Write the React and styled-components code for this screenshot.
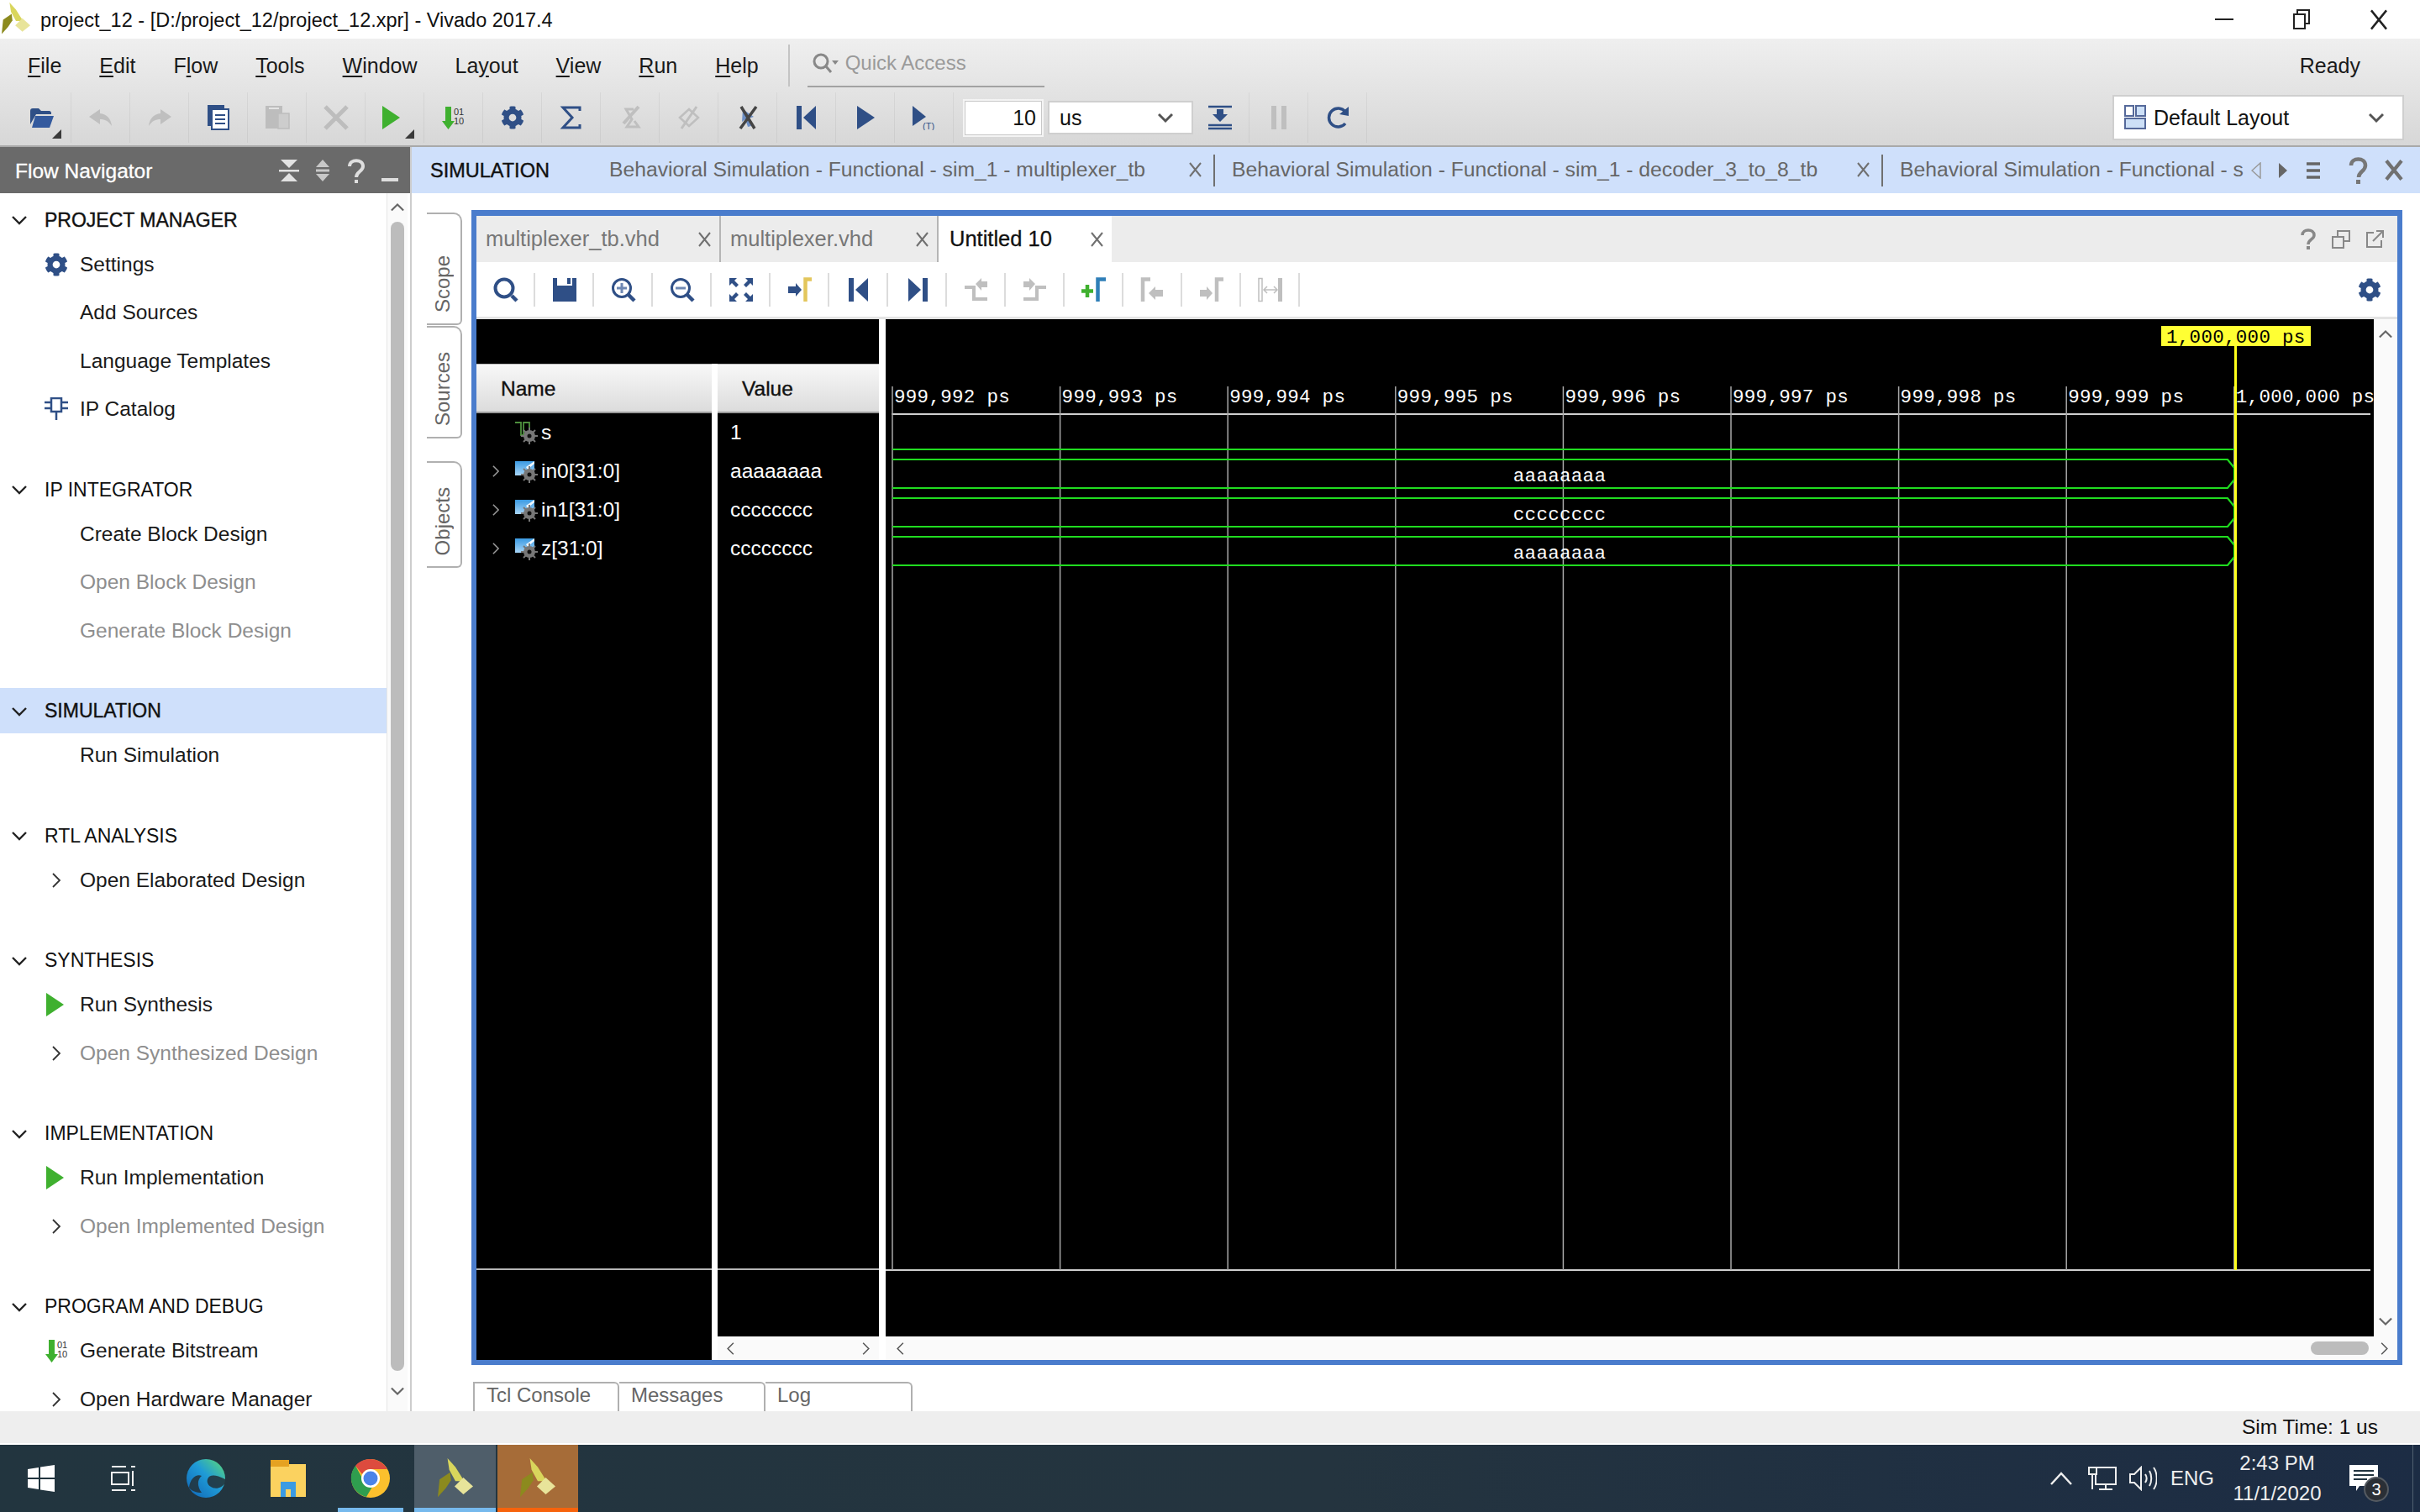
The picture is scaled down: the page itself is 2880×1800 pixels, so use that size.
import styled, { createGlobalStyle } from "styled-components";
import { FaCog } from "react-icons/fa";

const NAVY = "#2f4f86";
const OFF = "#bfbfbf";
const GREEN = "#3fb02f";
const WAVE_GREEN = "#20dc20";

const GlobalStyle = createGlobalStyle`
  html, body { margin: 0; padding: 0; background: #fff; overflow: hidden; }
  body { font-family: "Liberation Sans", Arial, sans-serif; font-size: 25px; color: #111; }
`;

const Page = styled.div`
  width: 2880px;
  height: 1800px;
  display: flex;
  flex-direction: column;
  overflow: hidden;
`;

/* ---------- title bar ---------- */
const TitleBar = styled.div`
  height: 46px;
  display: flex;
  align-items: center;
  background: #fff;
  padding-left: 2px;
`;
const TitleText = styled.span`
  margin: 2px 0 0 12px;
  font-size: 23.5px;
  color: #111;
`;
const WinControls = styled.div`
  margin-left: auto;
  display: flex;
  padding-right: 3px;
`;
const WinControl = styled.div`
  width: 92px;
  height: 46px;
  display: flex;
  align-items: center;
  justify-content: center;
`;

/* ---------- menu and main toolbar ---------- */
const TopBars = styled.div`
  height: 127px;
  border-bottom: 2px solid #a9a9a9;
  background: linear-gradient(#efefef, #d7d7d7);
`;
const MenuRow = styled.div`
  height: 64px;
  display: flex;
  align-items: center;
  padding-left: 33px;
`;
const MenuList = styled.div`
  display: flex;
  gap: 45px;
`;
const MenuItem = styled.span`
  font-size: 25px;
  color: #1a1a1a;
`;
const Mnemonic = styled.span`
  text-decoration: underline;
  text-underline-offset: 3px;
`;
const MenuDivider = styled.div`
  width: 2px;
  height: 50px;
  margin-left: 35px;
  background: #c4c4c4;
`;
const QuickAccess = styled.div`
  width: 282px;
  height: 50px;
  margin: 2px 0 0 21px;
  box-sizing: border-box;
  border-bottom: 2px solid #a2a2a2;
  display: flex;
  align-items: center;
  gap: 8px;
  padding: 0 0 7px 5px;
  font-size: 24px;
  color: #9a9a9a;
`;
const ReadyLabel = styled.span`
  margin-left: auto;
  padding-right: 71px;
  font-size: 25px;
  color: #1a1a1a;
`;
const ToolRow = styled.div`
  height: 63px;
  box-sizing: border-box;
  display: flex;
  align-items: center;
  padding: 0 0 3px 15px;
`;
const Tool = styled.div`
  position: relative;
  width: 70px;
  height: 100%;
  flex: none;
  box-sizing: border-box;
  display: flex;
  align-items: center;
  justify-content: center;
  padding-right: ${(p) => p.$nudge || 0}px;
  margin-left: ${(p) => p.$ml || 0}px;
  border-right: 1px solid rgba(0, 0, 0, 0.05);
  ${(p) => p.$caret && `
    &::after {
      content: "";
      position: absolute;
      right: 11px;
      bottom: 5px;
      border-style: solid;
      border-width: 0 0 11px 11px;
      border-color: transparent transparent #3a3a3a transparent;
    }
  `}
`;
const WaveTool = styled.div`
  position: relative;
  width: 70px;
  height: 100%;
  flex: none;
  display: flex;
  align-items: center;
  justify-content: center;
  &::after {
    content: "";
    position: absolute;
    right: 0;
    top: 13px;
    width: 2px;
    height: 40px;
    background: #dcdcdc;
  }
`;
const NumberBox = styled.div`
  width: 96px;
  height: 45px;
  margin-left: 11px;
  box-sizing: border-box;
  background: #fff;
  border: 2px solid #f4f4f4;
  outline: 1px solid #c8c8c8;
  outline-offset: -3px;
  display: flex;
  align-items: center;
  justify-content: flex-end;
  padding-right: 7px;
  font-size: 25px;
`;
const SelectBox = styled.div`
  width: ${(p) => p.$w}px;
  height: ${(p) => p.$h}px;
  margin-left: ${(p) => p.$ml || 0}px;
  box-sizing: border-box;
  background: #fff;
  border: 2px solid #cfcfcf;
  display: flex;
  align-items: center;
  gap: 9px;
  padding: 0 22px 0 12px;
  font-size: 25px;
  & > svg:last-child { margin-left: auto; }
`;
const LayoutWrap = styled.div`
  margin-left: auto;
  margin-right: 19px;
`;

/* ---------- body ---------- */
const Body = styled.div`
  height: 1505px;
  display: flex;
`;
const Nav = styled.div`
  width: 490px;
  flex: none;
  box-sizing: border-box;
  display: flex;
  flex-direction: column;
  border-right: 2px solid #cdcdcd;
`;
const NavTitle = styled.div`
  height: 55px;
  flex: none;
  box-sizing: border-box;
  background: #6a6a6a;
  color: #fff;
  display: flex;
  align-items: center;
  padding: 2px 0 0 18px;
  font-size: 24.5px;
  -webkit-text-stroke: 0.3px #fff;
`;
const NavTitleIcons = styled.div`
  margin-left: auto;
  display: flex;
  margin-right: 4px;
`;
const NavTitleIcon = styled.div`
  width: 40px;
  display: flex;
  justify-content: center;
`;
const NavBody = styled.div`
  flex: 1;
  min-height: 0;
  display: flex;
`;
const NavList = styled.div`
  width: 460px;
  flex: none;
  padding-top: 6px;
  overflow: hidden;
`;
const NavSection = styled.div`
  margin-bottom: 41px;
`;
const NavHeader = styled.div`
  height: 50px;
  box-sizing: border-box;
  padding-top: 2px;
  display: flex;
  align-items: center;
  font-size: 23px;
  color: #111;
  background: ${(p) => (p.$active ? "#cfe0fb" : "transparent")};
  box-shadow: ${(p) => (p.$active ? "0 -2px 0 #cfe0fb, 0 2px 0 #cfe0fb" : "none")};
  -webkit-text-stroke: ${(p) => (p.$strong ? "0.4px #111" : "0")};
`;
const NavChevronSlot = styled.div`
  width: 53px;
  flex: none;
  display: flex;
  justify-content: center;
  padding-right: 7px;
  box-sizing: border-box;
`;
const NavItem = styled.div`
  height: 57.5px;
  display: flex;
  align-items: center;
  font-size: 24.5px;
  color: ${(p) => (p.$off ? "#8e8e8e" : "#1a1a1a")};
`;
const NavIconSlot = styled.div`
  width: 42px;
  margin-left: 53px;
  flex: none;
  display: flex;
  align-items: center;
  justify-content: flex-start;
`;
const NavExpander = styled.div`
  width: 95px;
  padding-left: 58px;
  box-sizing: border-box;
  flex: none;
  display: flex;
`;
const NavScroll = styled.div`
  width: 25px;
  flex: none;
  background: #fafafa;
  border-left: 1px solid #e6e6e6;
  box-sizing: border-box;
  display: flex;
  flex-direction: column;
  align-items: center;
`;
const ScrollEnd = styled.div`
  height: ${(p) => p.$h}px;
  flex: none;
  display: flex;
  align-items: center;
  justify-content: center;
`;
const NavThumb = styled.div`
  width: 16px;
  flex: 1;
  background: #bcbcbc;
  border-radius: 8px;
`;

/* ---------- simulation side ---------- */
const Main = styled.div`
  flex: 1;
  min-width: 0;
  display: flex;
  flex-direction: column;
`;
const SimHeader = styled.div`
  height: 55px;
  flex: none;
  background: #cfe0fb;
  display: flex;
  align-items: center;
  padding-left: 22px;
  overflow: hidden;
`;
const SimTitle = styled.span`
  width: 193px;
  flex: none;
  margin-top: 2px;
  font-size: 23.5px;
  color: #111;
  -webkit-text-stroke: 0.4px #111;
`;
const SimTab = styled.div`
  width: ${(p) => p.$w}px;
  height: 38px;
  flex: none;
  box-sizing: border-box;
  padding: 0 14px 2px 20px;
  display: flex;
  align-items: center;
  justify-content: space-between;
  font-size: 24.7px;
  color: #666;
  white-space: nowrap;
  overflow: hidden;
  border-right: ${(p) => (p.$last ? "none" : "2px solid #707070")};
`;
const SimActions = styled.div`
  margin-left: auto;
  display: flex;
  align-items: center;
  padding-right: 20px;
  gap: 20px;
  & > svg:nth-child(4) { margin-left: 11px; }
`;
const Content = styled.div`
  height: 1405px;
  flex: none;
  padding-top: 20px;
  box-sizing: border-box;
  display: flex;
`;
const Rail = styled.div`
  width: 71px;
  flex: none;
  padding: 3px 0 0 18px;
  box-sizing: border-box;
  display: flex;
  flex-direction: column;
`;
const RailTab = styled.div`
  width: 42px;
  height: ${(p) => p.$h}px;
  flex: none;
  margin-bottom: ${(p) => p.$mb || 1}px;
  box-sizing: border-box;
  display: flex;
  justify-content: center;
  align-items: flex-end;
  padding: 0 3px 13px 0;
  border: 2px solid #b0b0b0;
  border-left: none;
  border-radius: 0 10px 6px 0;
`;
const RailLabel = styled.span`
  writing-mode: vertical-rl;
  transform: rotate(180deg);
  font-size: 24px;
  color: #666;
`;
const SimWindow = styled.div`
  width: 2298px;
  height: 1375px;
  flex: none;
  box-sizing: border-box;
  border: 6px solid #4a7ccc;
  border-top-width: 7px;
  display: flex;
  flex-direction: column;
  background: #fff;
`;
const WinTabs = styled.div`
  height: 55px;
  flex: none;
  background: #ececec;
  display: flex;
  align-items: center;
`;
const WinTab = styled.div`
  width: ${(p) => p.$w}px;
  height: 55px;
  flex: none;
  box-sizing: border-box;
  padding: 0 10px 0 ${(p) => (p.$active ? 13 : 11)}px;
  display: flex;
  align-items: center;
  justify-content: space-between;
  font-size: 25.5px;
  color: ${(p) => (p.$active ? "#111" : "#777")};
  background: ${(p) => (p.$active ? "#fff" : "transparent")};
  border-right: ${(p) => (p.$active ? "none" : "2px solid #b5b5b5")};
  -webkit-text-stroke: ${(p) => (p.$active ? "0.3px #111" : "0")};
`;
const WinTabActions = styled.div`
  margin-left: auto;
  display: flex;
  align-items: center;
  gap: 18px;
  padding-right: 16px;
`;
const WinToolbar = styled.div`
  height: 68px;
  flex: none;
  box-sizing: border-box;
  display: flex;
  align-items: center;
  border-bottom: 3px solid #e4e4e4;
  padding-right: 8px;
`;
const WinGear = styled.div`
  margin-left: auto;
  width: 50px;
  display: flex;
  justify-content: center;
`;
const Panes = styled.div`
  flex: 1;
  min-height: 0;
  display: flex;
`;
const NamesPane = styled.div`
  width: 479px;
  flex: none;
  display: flex;
  flex-direction: column;
`;
const NamesTop = styled.div`
  height: 53px;
  flex: none;
  background: #000;
`;
const NameColumns = styled.div`
  flex: 1;
  min-height: 0;
  display: grid;
  grid-template-columns: 280px 192px;
  column-gap: 7px;
`;
const Column = styled.div`
  display: flex;
  flex-direction: column;
  min-height: 0;
`;
const ColumnHead = styled.div`
  height: 59px;
  flex: none;
  box-sizing: border-box;
  padding: 2px 0 0 29px;
  display: flex;
  align-items: center;
  font-size: 24.5px;
  color: #111;
  -webkit-text-stroke: 0.4px #111;
  background: linear-gradient(#f8f8f8, #dcdcdc);
  border-top: 1px solid #bbb;
  border-bottom: 2px solid #9a9a9a;
`;
const ColumnRows = styled.div`
  flex: 1;
  min-height: 0;
  background: #000;
`;
const ColumnFoot = styled.div`
  height: ${(p) => p.$h}px;
  flex: none;
  background: #000;
  border-top: 2px solid #b5b5b5;
`;
const SignalRow = styled.div`
  height: 46px;
  display: flex;
  align-items: center;
  color: #fff;
  font-size: 24.5px;
`;
const RowChevron = styled.div`
  width: 46px;
  flex: none;
  display: flex;
  justify-content: center;
`;
const RowIcon = styled.div`
  width: 31px;
  flex: none;
  display: flex;
`;
const ValueRow = styled.div`
  height: 46px;
  padding-left: 15px;
  display: flex;
  align-items: center;
  color: #fff;
  font-size: 24.5px;
`;
const HBar = styled.div`
  height: 28px;
  flex: none;
  box-sizing: border-box;
  background: #fafafa;
  display: flex;
  align-items: center;
  justify-content: space-between;
  padding: 0 8px;
`;
const WavePane = styled.div`
  flex: 1;
  min-width: 0;
  margin-left: 8px;
  display: grid;
  grid-template-columns: 1fr 28px;
  grid-template-rows: 1fr 28px;
`;
const WaveCanvas = styled.svg`
  display: block;
  width: 100%;
  height: 100%;
  background: #000;
`;
const MonoText = styled.text`
  font-family: "Liberation Mono", "Courier New", monospace;
  font-size: 22.5px;
  letter-spacing: 0.3px;
  fill: ${(p) => p.$fill || "#fff"};
`;
const VBar = styled.div`
  background: #fafafa;
  display: flex;
  flex-direction: column;
  justify-content: space-between;
  align-items: center;
  padding: 10px 0;
`;
const WaveHBar = styled.div`
  grid-column: 1 / span 2;
  background: #fafafa;
  display: flex;
  align-items: center;
  padding: 0 8px 0 10px;
`;
const HThumb = styled.div`
  width: 69px;
  height: 16px;
  margin: 0 11px 0 auto;
  background: #bcbcbc;
  border-radius: 8px;
`;
const BottomTabs = styled.div`
  flex: 1;
  display: flex;
  padding: 10px 0 0 73px;
  align-items: stretch;
`;
const BottomTab = styled.div`
  width: ${(p) => p.$w}px;
  box-sizing: border-box;
  padding: 0 0 8px 14px;
  display: flex;
  align-items: center;
  font-size: 24px;
  color: #666;
  border: 2px solid #b0b0b0;
  border-width: 2px 2px 0 ${(p) => (p.$first ? 2 : 0)}px;
  border-radius: 0 6px 0 0;
`;

/* ---------- status bar and task bar ---------- */
const StatusBar = styled.div`
  height: 40px;
  flex: none;
  box-sizing: border-box;
  background: #eee;
  border-bottom: 2px solid #fff;
  display: flex;
  align-items: center;
  justify-content: flex-end;
  padding-right: 50px;
  font-size: 24.5px;
  color: #111;
`;
const Taskbar = styled.div`
  height: 80px;
  flex: none;
  display: flex;
  background: linear-gradient(90deg, #22353f, #24343f 55%, #1c2c44);
`;
const TaskSlot = styled.div`
  position: relative;
  width: ${(p) => p.$w || 98}px;
  margin-left: ${(p) => p.$ml || 0}px;
  flex: none;
  display: flex;
  align-items: center;
  justify-content: center;
  background: ${(p) => p.$bg || "transparent"};
  ${(p) => p.$line && `
    &::after {
      content: "";
      position: absolute;
      left: ${p.$inset || 0}px;
      right: ${p.$inset || 0}px;
      bottom: 0;
      height: 5px;
      background: ${p.$line};
    }
  `}
`;
const Tray = styled.div`
  margin-left: auto;
  display: flex;
  color: #eee;
`;
const TrayItem = styled.div`
  position: relative;
  width: ${(p) => p.$w}px;
  display: flex;
  flex-direction: column;
  align-items: center;
  justify-content: center;
  font-size: 24px;
  line-height: 36px;
`;
const TrayBadge = styled.div`
  position: absolute;
  left: 37px;
  top: 38px;
  width: 30px;
  height: 30px;
  box-sizing: border-box;
  border-radius: 50%;
  background: #2a2f36;
  border: 2px solid #555b62;
  color: #fff;
  font-size: 20px;
  line-height: 26px;
  text-align: center;
`;
const TrayEdge = styled.div`
  width: 1px;
  margin: 0 8px 0 21px;
  background: #4f5f70;
`;

/* ---------- small drawings ---------- */
const Chev = ({ dir = "down", size = 18, color = "#222", w = 2.4 }) => {
  const rot = { down: 0, up: 180, right: -90, left: 90 }[dir];
  return (
    <svg width={size} height={size} viewBox="0 0 18 18" style={{ transform: `rotate(${rot}deg)` }}>
      <polyline points="1,5 9,13 17,5" fill="none" stroke={color} strokeWidth={w} />
    </svg>
  );
};

const CloseX = ({ size = 15, color = "#707070", w = 2 }) => (
  <svg width={size} height={size + 3} viewBox="0 0 15 18" style={{ flex: "none" }}>
    <path d="M1 1L14 17M14 1L1 17" stroke={color} strokeWidth={w} fill="none" />
  </svg>
);

const Logo = ({ size = 40 }) => (
  <svg width={size} height={size * 1.15} viewBox="0 0 40 46">
    <polygon points="11,0 20,10 30,26 20,26 13,13" fill="#d9d65c" />
    <polygon points="29,22 40,32 29,41 19,32" fill="#e8e49a" />
    <polygon points="0,44 2,24 14,16 15,25 9,34" fill="#8c8a1e" />
  </svg>
);

const Ic = ({ w = 30, h = 30, box, children }) => (
  <svg width={w} height={h} viewBox={box || `0 0 ${w} ${h}`}>
    {children}
  </svg>
);

const Gear = ({ size = 26 }) => <FaCog size={size} color={NAVY} />;

const icons = {
  open: (
    <Ic w={30} h={28}>
      <path d="M1 6a3 3 0 0 1 3-3h7l3 3h10a3 3 0 0 1 2 2v2H8L1 22z" fill={NAVY} />
      <path d="M7 12h22l-5 14H3z" fill="#345a9e" />
    </Ic>
  ),
  undo: (
    <Ic w={30} h={24}>
      <path d="M14 2L1 11l13 9v-6c6 0 10 2 14 8-1-9-6-14-14-15z" fill={OFF} />
    </Ic>
  ),
  redo: (
    <Ic w={30} h={24}>
      <path d="M16 2l13 9-13 9v-6c-6 0-10 2-14 8 1-9 6-14 14-15z" fill={OFF} />
    </Ic>
  ),
  doc: (
    <Ic w={26} h={30}>
      <rect x="0" y="0" width="20" height="25" fill={NAVY} />
      <rect x="5" y="5" width="20" height="24" fill="#fff" stroke={NAVY} strokeWidth="2" />
      <path d="M9 12h12M9 17h12M9 22h12" stroke={NAVY} strokeWidth="2.200" />
    </Ic>
  ),
  paste: (
    <Ic w={30} h={30}>
      <rect x="1" y="1" width="20" height="27" fill="#bdbdbd" />
      <rect x="5" y="3" width="12" height="2" fill="#e4e4e4" />
      <rect x="16" y="10" width="13" height="18" fill="#cdcdcd" stroke="#bdbdbd" strokeWidth="1.500" />
    </Ic>
  ),
  cross: (
    <Ic w={30} h={30}>
      <path d="M2 2l26 26M28 2L2 28" stroke="#bdbdbd" strokeWidth="5" />
    </Ic>
  ),
  run: (
    <Ic w={24} h={28}>
      <polygon points="2,0 23,14 2,28" fill={GREEN} />
    </Ic>
  ),
  bits: (
    <Ic w={30} h={30}>
      <path d="M5 2h7v17h4L8.500 29 1 19h4z" fill={GREEN} />
      <text x="15" y="12" fontSize="11" fontFamily="Liberation Sans" fill="#333">01</text>
      <text x="15" y="23" fontSize="11" fontFamily="Liberation Sans" fill="#333">10</text>
    </Ic>
  ),
  sigma: (
    <Ic w={28} h={30}>
      <path d="M24 7V3H4l11 12L4 27h20v-4" fill="none" stroke={NAVY} strokeWidth="3" />
    </Ic>
  ),
  sigmaOff: (
    <Ic w={28} h={30}>
      <path d="M18 5h-9l7 12-6 9h14l-5-7" fill="none" stroke={OFF} strokeWidth="3" />
      <path d="M24 2L6 22" stroke={OFF} strokeWidth="4" />
    </Ic>
  ),
  slashOff: (
    <Ic w={28} h={30}>
      <path d="M3 15L14 5l11 10-11 10z" fill="none" stroke={OFF} strokeWidth="2.500" />
      <path d="M23 2L5 28" stroke={OFF} strokeWidth="3" />
    </Ic>
  ),
  bug: (
    <Ic w={28} h={30}>
      <path d="M8 5l13 9-6 2 3 9-4 1-3-9-4 3z" fill="#6c8fc6" />
      <path d="M24 2L5 28M6 2l16 26" stroke="#444" strokeWidth="3.500" />
    </Ic>
  ),
  first: (
    <Ic w={26} h={30}>
      <rect x="1" y="1" width="6" height="28" fill={NAVY} />
      <polygon points="24,1 9,15 24,29" fill={NAVY} />
    </Ic>
  ),
  last: (
    <Ic w={26} h={30}>
      <rect x="19" y="1" width="6" height="28" fill={NAVY} />
      <polygon points="2,1 17,15 2,29" fill={NAVY} />
    </Ic>
  ),
  play: (
    <Ic w={24} h={28}>
      <polygon points="2,0 23,14 2,28" fill={NAVY} />
    </Ic>
  ),
  playT: (
    <Ic w={32} h={30}>
      <polygon points="2,1 18,14 2,25" fill={NAVY} />
      <text x="14" y="29" fontSize="11" fontFamily="Liberation Sans" fill={NAVY}>(T)</text>
    </Ic>
  ),
  saveDown: (
    <Ic w={30} h={30}>
      <path d="M1 2h28M1 24h28M1 28h28" stroke={NAVY} strokeWidth="2.500" />
      <path d="M11 5h8v6h5l-9 9-9-9h5z" fill={NAVY} />
    </Ic>
  ),
  pause: (
    <Ic w={22} h={30}>
      <rect x="2" y="1" width="6" height="28" fill={OFF} />
      <rect x="14" y="1" width="6" height="28" fill={OFF} />
    </Ic>
  ),
  reload: (
    <Ic w={30} h={30}>
      <path d="M24 22a11 11 0 1 1 0-14" fill="none" stroke={NAVY} strokeWidth="3.500" />
      <polygon points="28,2 28,13 17,11" fill={NAVY} />
    </Ic>
  ),
  search: (
    <Ic w={30} h={30}>
      <circle cx="13" cy="13" r="10.500" fill="none" stroke={NAVY} strokeWidth="4" />
      <path d="M22 22l6 6" stroke={NAVY} strokeWidth="4.500" />
    </Ic>
  ),
  save: (
    <Ic w={30} h={30}>
      <path d="M1 1h5v9h18V1h5v28H1z" fill={NAVY} />
      <rect x="18" y="1" width="4" height="7" fill={NAVY} />
    </Ic>
  ),
  zoomIn: (
    <Ic w={30} h={30}>
      <circle cx="13" cy="13" r="10.500" fill="none" stroke={NAVY} strokeWidth="3" />
      <path d="M21 21l7 7" stroke={NAVY} strokeWidth="4.500" />
      <path d="M13 7v12M7 13h12" stroke="#6f88b3" strokeWidth="3" />
    </Ic>
  ),
  zoomOut: (
    <Ic w={30} h={30}>
      <circle cx="13" cy="13" r="10.500" fill="none" stroke={NAVY} strokeWidth="3" />
      <path d="M21 21l7 7" stroke={NAVY} strokeWidth="4.500" />
      <path d="M7 13h12" stroke="#6f88b3" strokeWidth="3" />
    </Ic>
  ),
  fit: (
    <Ic w={30} h={30}>
      <path d="M1 1h9L7 4l5 5-3 3-5-5-3 3zM29 1v9l-3-3-5 5-3-3 5-5-3-3zM1 29v-9l3 3 5-5 3 3-5 5 3 3zM29 29h-9l3-3-5-5 3-3 5 5 3-3z" fill={NAVY} />
    </Ic>
  ),
  markerGo: (
    <Ic w={30} h={30}>
      <path d="M1 11h9V7l7 8-7 8v-4H1z" fill={NAVY} />
      <path d="M21.500 29V2.500H29" fill="none" stroke="#e3c65c" strokeWidth="4.500" />
    </Ic>
  ),
  edgeBack: (
    <Ic w={30} h={30}>
      <path d="M1 12H12V26H28" fill="none" stroke={OFF} strokeWidth="4" />
      <polygon points="14,8 21,1 21,5 28,5 28,12 21,12 21,16" fill={OFF} />
    </Ic>
  ),
  edgeNext: (
    <Ic w={30} h={30}>
      <path d="M1 26H17V12H28" fill="none" stroke={OFF} strokeWidth="4" />
      <polygon points="1,5 8,5 8,1 15,8 8,16 8,12 1,12" fill={OFF} />
    </Ic>
  ),
  markerAdd: (
    <Ic w={30} h={30}>
      <path d="M7 9v15M0 16.500h14" stroke={GREEN} strokeWidth="4.500" />
      <path d="M19.500 29V2.500H29" fill="none" stroke="#2f7fb8" strokeWidth="4.500" />
    </Ic>
  ),
  markerPrev: (
    <Ic w={30} h={30}>
      <path d="M3 29V2.500H12" fill="none" stroke={OFF} strokeWidth="4.500" />
      <polygon points="10,19 18,11 18,15 27,15 27,23 18,23 18,27" fill={OFF} />
    </Ic>
  ),
  markerNext: (
    <Ic w={30} h={30}>
      <polygon points="1,15 9,15 9,11 16,19 9,27 9,23 1,23" fill={OFF} />
      <path d="M21 29V2.500H29" fill="none" stroke={OFF} strokeWidth="4.500" />
    </Ic>
  ),
  span: (
    <Ic w={30} h={30}>
      <rect x="1" y="1.500" width="4" height="27" fill="none" stroke={OFF} strokeWidth="1.500" />
      <rect x="24" y="1" width="5" height="28" fill={OFF} />
      <path d="M7 15h16M11 11l-4 4 4 4M19 11l4 4-4 4" fill="none" stroke={OFF} strokeWidth="1.500" />
    </Ic>
  ),
};

const CollapseIcon = ({ mode }) => (
  <Ic w={24} h={28}>
    {mode === "a" ? (
      <>
        <polygon points="2,1 22,1 12,11" fill="#e2e2e2" />
        <polygon points="2,27 22,27 12,17" fill="#e2e2e2" />
        <rect x="0" y="13" width="24" height="2.500" fill="#e2e2e2" />
      </>
    ) : (
      <>
        <polygon points="4,10 20,10 12,1" fill="#c8c8c8" />
        <polygon points="4,18 20,18 12,27" fill="#c8c8c8" />
        <rect x="4" y="12.500" width="16" height="3" fill="#c8c8c8" />
      </>
    )}
  </Ic>
);

const IpIcon = () => (
  <Ic w={28} h={28}>
    <rect x="8" y="1" width="12" height="16" fill="none" stroke={NAVY} strokeWidth="2.500" />
    <path d="M0 6h8M20 6h8M0 13h8M20 13h8M14 17v10" stroke={NAVY} strokeWidth="2.500" />
  </Ic>
);

const SignalGear = () => (
  <>
    <circle cx="17" cy="18" r="7" fill="#777" />
    <path d="M17 8v20M7 18h20M10 11l14 14M24 11L10 25" stroke="#777" strokeWidth="2" />
    <circle cx="17" cy="18" r="2.500" fill="#111" />
  </>
);

const BusIcon = () => (
  <Ic w={27} h={28}>
    <defs>
      <linearGradient id="busFill" x1="0" y1="0" x2="0" y2="1">
        <stop offset="0" stopColor="#3b9ae2" />
        <stop offset="1" stopColor="#a8d6f7" />
      </linearGradient>
    </defs>
    <rect x="0" y="2" width="23" height="17" fill="url(#busFill)" />
    <polygon points="23,2 23,5 15,12 13,9" fill="#eef7ff" />
    <SignalGear />
  </Ic>
);

const BitIcon = () => (
  <Ic w={27} h={28}>
    <path d="M0 2H7V17H10V2H17V14" fill="none" stroke="#4d8f3d" strokeWidth="1.800" />
    <SignalGear />
  </Ic>
);

const LayoutIcon = () => (
  <Ic w={26} h={30}>
    <rect x="1" y="1" width="10" height="12" fill="none" stroke="#55699a" strokeWidth="2" />
    <rect x="14" y="1" width="11" height="12" fill="#cde0f7" stroke="#55699a" strokeWidth="2" />
    <rect x="1" y="16" width="24" height="12" fill="#cde0f7" stroke="#55699a" strokeWidth="2" />
  </Ic>
);

const WindowsMark = () => (
  <Ic w={34} h={34}>
    <path d="M1 6l13-2v12H1zM16 3.500L33 1v15H16zM1 18h13v12L1 28zM16 18h17v15l-17-2.500z" fill="#fff" />
  </Ic>
);

const TaskViewMark = () => (
  <Ic w={32} h={34}>
    <path d="M2 3h17M2 31h17M25 3h5M25 31h5M27 8v18" stroke="#f0f0f0" strokeWidth="2" fill="none" />
    <rect x="2" y="10" width="20" height="14" fill="none" stroke="#f0f0f0" strokeWidth="2" />
  </Ic>
);

const EdgeMark = () => (
  <svg width="48" height="50" viewBox="0 0 48 50">
    <defs>
      <linearGradient id="edgeFill" x1="0" y1="1" x2="1" y2="0">
        <stop offset="0" stopColor="#0f63b5" />
        <stop offset="0.55" stopColor="#1f9bd6" />
        <stop offset="1" stopColor="#5fdc72" />
      </linearGradient>
    </defs>
    <circle cx="24" cy="25" r="23" fill="url(#edgeFill)" />
    <path d="M47 30c-3 6-10 8-15 6-6-2-8-8-5-12 2-3 8-4 20 2zM4 36c1-11 9-17 15-14-5 4-6 12 0 20-6 0-12-2-15-6z" fill="#22353f" opacity="0.9" />
  </svg>
);

const FolderMark = () => (
  <Ic w={44} h={46}>
    <path d="M1 1h18l4 5h20v39H1z" fill="#fbd25f" />
    <rect x="1" y="1" width="22" height="8" fill="#e5a222" />
    <path d="M13 27h18v18h-6v-9h-6v9h-6z" fill="#3b9be3" />
  </Ic>
);

const ChromeMark = () => (
  <svg width="48" height="48" viewBox="0 0 48 48">
    <circle cx="24" cy="24" r="23" fill="#fbc02d" />
    <path d="M24 1a23 23 0 0 1 20 12H24a11 11 0 0 0-10 6L6 9A23 23 0 0 1 24 1z" fill="#dd4b3e" />
    <path d="M6 9l10 18a10 10 0 0 0 10 7l-7 12A23 23 0 0 1 6 9z" fill="#2f9e4f" />
    <circle cx="24" cy="24" r="11" fill="#fff" />
    <circle cx="24" cy="24" r="8.500" fill="#4b83e8" />
  </svg>
);

const NetworkMark = () => (
  <Ic w={34} h={30}>
    <rect x="9" y="2" width="24" height="20" fill="none" stroke="#eee" strokeWidth="2" />
    <path d="M21 22v6M13 28h16" stroke="#eee" strokeWidth="2" />
    <rect x="1" y="2" width="9" height="8" fill="#22343f" stroke="#eee" strokeWidth="2" />
    <path d="M5 10v18" stroke="#eee" strokeWidth="2" />
  </Ic>
);

const SpeakerMark = () => (
  <Ic w={34} h={30}>
    <path d="M2 10h5l8-8v26l-8-8H2z" fill="none" stroke="#eee" strokeWidth="2" />
    <path d="M20 10c2 3 2 7 0 10M25 6c3 5 3 13 0 18M30 2c5 7 5 19 0 26" fill="none" stroke="#eee" strokeWidth="2" />
  </Ic>
);

const NotifyMark = () => (
  <Ic w={34} h={34}>
    <path d="M0 1h34v25H12l-4 6v-6H0z" fill="#fff" />
    <path d="M5 8h24M5 13h24M5 18h16" stroke="#22343f" strokeWidth="2" />
  </Ic>
);

/* ---------- data ---------- */
const MENUS = [
  ["", "F", "ile"],
  ["", "E", "dit"],
  ["F", "l", "ow"],
  ["", "T", "ools"],
  ["", "W", "indow"],
  ["La", "y", "out"],
  ["", "V", "iew"],
  ["", "R", "un"],
  ["", "H", "elp"],
];

const NAV = [
  { title: "PROJECT MANAGER", strong: true, items: [
    { label: "Settings", icon: <Gear size={28} /> },
    { label: "Add Sources" },
    { label: "Language Templates" },
    { label: "IP Catalog", icon: <IpIcon /> },
  ] },
  { title: "IP INTEGRATOR", items: [
    { label: "Create Block Design" },
    { label: "Open Block Design", off: true },
    { label: "Generate Block Design", off: true },
  ] },
  { title: "SIMULATION", active: true, strong: true, items: [{ label: "Run Simulation" }] },
  { title: "RTL ANALYSIS", items: [{ label: "Open Elaborated Design", expand: true }] },
  { title: "SYNTHESIS", items: [
    { label: "Run Synthesis", icon: icons.run },
    { label: "Open Synthesized Design", expand: true, off: true },
  ] },
  { title: "IMPLEMENTATION", items: [
    { label: "Run Implementation", icon: icons.run },
    { label: "Open Implemented Design", expand: true, off: true },
  ] },
  { title: "PROGRAM AND DEBUG", items: [
    { label: "Generate Bitstream", icon: icons.bits },
    { label: "Open Hardware Manager", expand: true },
  ] },
];

const TOP_TOOLS = ["open", "undo", "redo", "doc", "paste", "cross", "run", "bits", null, "sigma", "sigmaOff", "slashOff", "bug", "first", "play", "playT"];
const WAVE_TOOLS = ["search", "save", "zoomIn", "zoomOut", "fit", "markerGo", "first", "last", "edgeBack", "edgeNext", "markerAdd", "markerPrev", "markerNext", "span"];

const SIGNALS = [
  { name: "s", value: "1", bit: true },
  { name: "in0[31:0]", value: "aaaaaaaa" },
  { name: "in1[31:0]", value: "cccccccc" },
  { name: "z[31:0]", value: "cccccccc" },
];

const TICK_LABELS = ["999,992 ps", "999,993 ps", "999,994 ps", "999,995 ps", "999,996 ps", "999,997 ps", "999,998 ps", "999,999 ps", "1,000,000 ps"];
const BUSES = [
  { top: 167, text: "aaaaaaaa" },
  { top: 213, text: "cccccccc" },
  { top: 259, text: "aaaaaaaa" },
];

const NavPanel = () => (
  <Nav>
    <NavTitle>
      Flow Navigator
      <NavTitleIcons>
        <NavTitleIcon><CollapseIcon mode="a" /></NavTitleIcon>
        <NavTitleIcon><CollapseIcon mode="b" /></NavTitleIcon>
        <NavTitleIcon>
          <svg width="22" height="30" viewBox="0 0 22 30">
            <path d="M3 9c0-9 16-9 16 0 0 6-8 6-8 13" fill="none" stroke="#dedede" strokeWidth="4" />
            <rect x="9" y="25" width="4" height="4" fill="#dedede" />
          </svg>
        </NavTitleIcon>
        <NavTitleIcon>
          <svg width="22" height="30" viewBox="0 0 22 30">
            <rect x="1" y="23" width="20" height="4" fill="#dedede" />
          </svg>
        </NavTitleIcon>
      </NavTitleIcons>
    </NavTitle>
    <NavBody>
      <NavList>
        {NAV.map((section) => (
          <NavSection key={section.title}>
            <NavHeader $active={section.active} $strong={section.strong}>
              <NavChevronSlot><Chev /></NavChevronSlot>
              {section.title}
            </NavHeader>
            {section.items.map((item) => (
              <NavItem key={item.label} $off={item.off}>
                {item.expand ? (
                  <NavExpander><Chev dir="right" color="#333" w={1.800} /></NavExpander>
                ) : (
                  <NavIconSlot>{item.icon}</NavIconSlot>
                )}
                {item.label}
              </NavItem>
            ))}
          </NavSection>
        ))}
      </NavList>
      <NavScroll>
        <ScrollEnd $h={34}><Chev dir="up" size={16} color="#666" /></ScrollEnd>
        <NavThumb />
        <ScrollEnd $h={48}><Chev size={16} color="#666" /></ScrollEnd>
      </NavScroll>
    </NavBody>
  </Nav>
);

const Waves = () => (
  <WaveCanvas viewBox="0 0 1771 1211" preserveAspectRatio="none">
    <path d="M7 113H1767M0 1132H1767" stroke="#cfcfcf" strokeWidth="2" />
    {TICK_LABELS.map((label, i) => {
      const x = 8 + i * 199.6;
      return (
        <g key={label}>
          <path d={`M${x} 80V1132`} stroke="#a8a8a8" strokeWidth="1.500" />
          <MonoText x={x + 2} y={99}>{label}</MonoText>
        </g>
      );
    })}
    <path d="M8 155H1606" stroke={WAVE_GREEN} strokeWidth="2.200" />
    {BUSES.map(({ top, text }, i) => (
      <g key={i}>
        <path
          d={`M8 ${top}H1597L1605 ${top + 10}V${top + 24}L1597 ${top + 34}H8`}
          fill="none"
          stroke={WAVE_GREEN}
          strokeWidth="2.200"
        />
        <MonoText x={802} y={top + 26} textAnchor="middle">{text}</MonoText>
      </g>
    ))}
    <rect x="1605" y="32" width="3" height="1100" fill="#ffff1a" />
    <rect x="1518" y="8" width="178" height="24" fill="#ffff33" />
    <MonoText x={1524} y={28} $fill="#000">1,000,000 ps</MonoText>
  </WaveCanvas>
);

const SimulationWindow = () => (
  <SimWindow>
    <WinTabs>
      <WinTab $w={291}>multiplexer_tb.vhd<CloseX /></WinTab>
      <WinTab $w={259}>multiplexer.vhd<CloseX /></WinTab>
      <WinTab $w={206} $active>Untitled 10<CloseX /></WinTab>
      <WinTabActions>
        <svg width="20" height="26" viewBox="0 0 20 26">
          <path d="M3 8c0-8 14-8 14 0 0 5-7 5-7 11" fill="none" stroke="#888" strokeWidth="3.500" />
          <rect x="8" y="21" width="4" height="4" fill="#888" />
        </svg>
        <svg width="22" height="22" viewBox="0 0 22 22">
          <rect x="7" y="1" width="14" height="12" fill="none" stroke="#888" strokeWidth="2" />
          <rect x="1" y="8" width="13" height="13" fill="#ececec" stroke="#888" strokeWidth="2" />
        </svg>
        <svg width="22" height="22" viewBox="0 0 22 22">
          <path d="M10 3H2v17h17v-8" fill="none" stroke="#888" strokeWidth="2" />
          <path d="M9 13L20 2M13 1h8v8" fill="none" stroke="#888" strokeWidth="2" />
        </svg>
      </WinTabActions>
    </WinTabs>
    <WinToolbar>
      {WAVE_TOOLS.map((name, i) => <WaveTool key={i}>{icons[name]}</WaveTool>)}
      <WinGear><Gear size={28} /></WinGear>
    </WinToolbar>
    <Panes>
      <NamesPane>
        <NamesTop />
        <NameColumns>
          <Column>
            <ColumnHead>Name</ColumnHead>
            <ColumnRows>
              {SIGNALS.map((sig) => (
                <SignalRow key={sig.name}>
                  <RowChevron>{!sig.bit && <Chev dir="right" size={14} color="#999" w={2} />}</RowChevron>
                  <RowIcon>{sig.bit ? <BitIcon /> : <BusIcon />}</RowIcon>
                  {sig.name}
                </SignalRow>
              ))}
            </ColumnRows>
            <ColumnFoot $h={107} />
          </Column>
          <Column>
            <ColumnHead>Value</ColumnHead>
            <ColumnRows>
              {SIGNALS.map((sig) => <ValueRow key={sig.name}>{sig.value}</ValueRow>)}
            </ColumnRows>
            <ColumnFoot $h={79} />
            <HBar>
              <Chev dir="left" size={15} color="#555" w={1.800} />
              <Chev dir="right" size={15} color="#555" w={1.800} />
            </HBar>
          </Column>
        </NameColumns>
      </NamesPane>
      <WavePane>
        <Waves />
        <VBar>
          <Chev dir="up" size={16} color="#666" />
          <Chev size={16} color="#666" />
        </VBar>
        <WaveHBar>
          <Chev dir="left" size={15} color="#555" w={1.800} />
          <HThumb />
          <Chev dir="right" size={15} color="#555" w={1.800} />
        </WaveHBar>
      </WavePane>
    </Panes>
  </SimWindow>
);

const App = () => (
  <Page>
    <GlobalStyle />
    <TitleBar>
      <Logo size={34} />
      <TitleText>project_12 - [D:/project_12/project_12.xpr] - Vivado 2017.4</TitleText>
      <WinControls>
        <WinControl>
          <svg width="22" height="4"><rect width="22" height="2" y="1" fill="#222" /></svg>
        </WinControl>
        <WinControl>
          <svg width="22" height="24" viewBox="0 0 22 24">
            <rect x="6" y="1" width="14" height="16" fill="none" stroke="#222" strokeWidth="2" />
            <rect x="2" y="6" width="13" height="17" fill="#fff" stroke="#222" strokeWidth="2" />
          </svg>
        </WinControl>
        <WinControl><CloseX size={22} color="#222" w={1.800} /></WinControl>
      </WinControls>
    </TitleBar>

    <TopBars>
      <MenuRow>
        <MenuList>
          {MENUS.map(([before, key, after]) => (
            <MenuItem key={before + key + after}>{before}<Mnemonic>{key}</Mnemonic>{after}</MenuItem>
          ))}
        </MenuList>
        <MenuDivider />
        <QuickAccess>
          <svg width="32" height="26" viewBox="0 0 32 26">
            <circle cx="11" cy="11" r="8" fill="none" stroke="#888" strokeWidth="3" />
            <path d="M17 17l6 7" stroke="#888" strokeWidth="3" />
            <polygon points="24,10 32,10 28,15" fill="#888" />
          </svg>
          Quick Access
        </QuickAccess>
        <ReadyLabel>Ready</ReadyLabel>
      </MenuRow>
      <ToolRow>
        {TOP_TOOLS.map((name, i) => (
          <Tool key={i} $caret={name === "open" || name === "run"} $nudge={name === "run" ? 10 : 0}>
            {name ? icons[name] : <Gear size={28} />}
          </Tool>
        ))}
        <NumberBox>10</NumberBox>
        <SelectBox $w={173} $h={40} $ml={5}>us<Chev color="#555" w={3} /></SelectBox>
        <Tool $ml={-3}>{icons.saveDown}</Tool>
        <Tool>{icons.pause}</Tool>
        <Tool>{icons.reload}</Tool>
        <LayoutWrap>
          <SelectBox $w={347} $h={54}><LayoutIcon />Default Layout<Chev color="#555" w={3} /></SelectBox>
        </LayoutWrap>
      </ToolRow>
    </TopBars>

    <Body>
      <NavPanel />
      <Main>
        <SimHeader>
          <SimTitle>SIMULATION</SimTitle>
          <SimTab $w={741}>Behavioral Simulation - Functional - sim_1 - multiplexer_tb<CloseX /></SimTab>
          <SimTab $w={795}>Behavioral Simulation - Functional - sim_1 - decoder_3_to_8_tb<CloseX /></SimTab>
          <SimTab $w={430} $last>Behavioral Simulation - Functional - s</SimTab>
          <SimActions>
            <svg width="12" height="20" viewBox="0 0 12 20"><polygon points="11,1 1,10 11,19" fill="none" stroke="#999" strokeWidth="1.500" /></svg>
            <svg width="12" height="20" viewBox="0 0 12 20"><polygon points="1,1 11,10 1,19" fill="#666" /></svg>
            <svg width="20" height="22" viewBox="0 0 20 22"><path d="M2 3h16M2 11h16M2 19h16" stroke="#666" strokeWidth="3.500" /></svg>
            <svg width="24" height="32" viewBox="0 0 24 32"><path d="M4 10c0-10 17-10 17 0 0 7-8 7-8 14" fill="none" stroke="#777" strokeWidth="4.500" /><rect x="10" y="27" width="5" height="5" fill="#777" /></svg>
            <CloseX size={22} w={3} />
          </SimActions>
        </SimHeader>
        <Content>
          <Rail>
            <RailTab $h={134}><RailLabel>Scope</RailLabel></RailTab>
            <RailTab $h={134} $mb={27}><RailLabel>Sources</RailLabel></RailTab>
            <RailTab $h={127}><RailLabel>Objects</RailLabel></RailTab>
          </Rail>
          <SimulationWindow />
        </Content>
        <BottomTabs>
          <BottomTab $w={174} $first>Tcl Console</BottomTab>
          <BottomTab $w={174}>Messages</BottomTab>
          <BottomTab $w={175}>Log</BottomTab>
        </BottomTabs>
      </Main>
    </Body>

    <StatusBar>Sim Time: 1 us</StatusBar>

    <Taskbar>
      <TaskSlot><WindowsMark /></TaskSlot>
      <TaskSlot><TaskViewMark /></TaskSlot>
      <TaskSlot><EdgeMark /></TaskSlot>
      <TaskSlot><FolderMark /></TaskSlot>
      <TaskSlot $line="#76b9ed" $inset={10}><ChromeMark /></TaskSlot>
      <TaskSlot $w={97} $ml={3} $bg="#4f5e6a" $line="#76b9ed"><Logo size={42} /></TaskSlot>
      <TaskSlot $w={96} $ml={2} $bg="#a66c38" $line="#f7630c"><Logo size={42} /></TaskSlot>
      <Tray>
        <TrayItem $w={50}>
          <svg width="26" height="16" viewBox="0 0 26 16"><polyline points="1,15 13,2 25,15" fill="none" stroke="#eee" strokeWidth="2.500" /></svg>
        </TrayItem>
        <TrayItem $w={48}><NetworkMark /></TrayItem>
        <TrayItem $w={48}><SpeakerMark /></TrayItem>
        <TrayItem $w={70}>ENG</TrayItem>
        <TrayItem $w={132}><span>2:43 PM</span><span>11/1/2020</span></TrayItem>
        <TrayItem $w={74}>
          <NotifyMark />
          <TrayBadge>3</TrayBadge>
        </TrayItem>
        <TrayEdge />
      </Tray>
    </Taskbar>
  </Page>
);

export default App;
